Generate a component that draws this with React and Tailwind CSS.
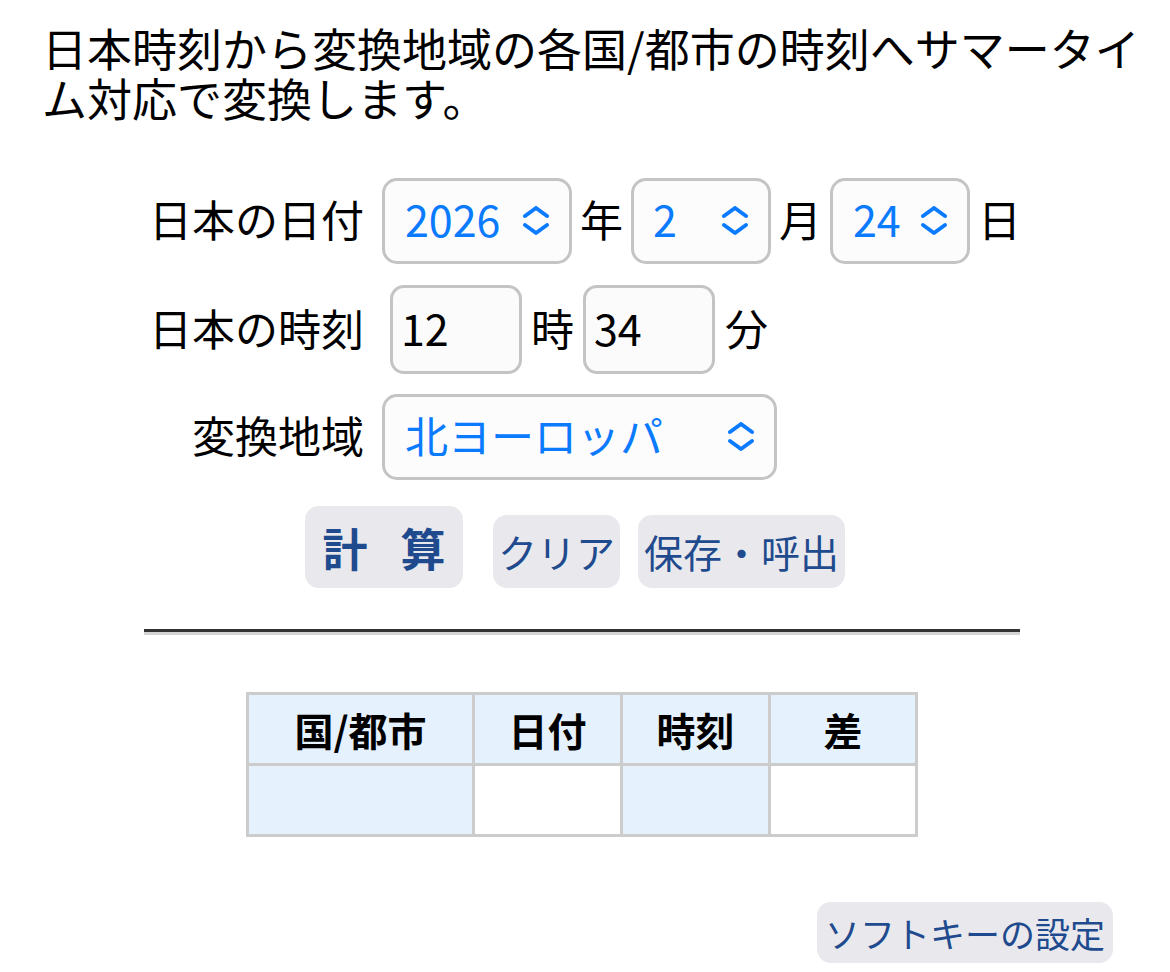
import React from "react";

const font = { fontFamily: '"Noto Sans CJK JP", "Noto Sans", sans-serif' };

const Chevrons = () => (
  <svg width="28" height="30" viewBox="0 0 28 30" fill="none" stroke="#0a7aff" strokeWidth="4" strokeLinecap="round" strokeLinejoin="round">
    <path d="M3 10 L14 2 L25 10" />
    <path d="M3 19 L14 27 L25 19" />
  </svg>
);

const Select = ({ value, w, pl = "pl-[20px]" }) => (
  <div className={`flex h-[86px] ${w} items-center justify-between rounded-[15px] border-[3px] border-[#c4c4c4] bg-[#fcfcfc] ${pl} pr-[19px] text-[43px] leading-none text-[#0a7aff]`}>
    <span className="-mt-[5px]">{value}</span>
    <Chevrons />
  </div>
);

const Field = ({ value }) => (
  <div className="flex h-[89px] w-[132px] items-center rounded-[14px] border-[3px] border-[#c4c4c4] bg-[#fbfbfb] pl-[8px] text-[43px] leading-none text-black">
    <span className="-mt-[4px]">{value}</span>
  </div>
);

const Unit = ({ children }) => <span className="-mt-[5px] text-[43px] leading-none text-black">{children}</span>;

const btn = "flex items-center justify-center rounded-[14px] bg-[#e9e9ed] text-[#1f4b8e]";

export default function App() {
  return (
    <div className="min-h-screen w-full bg-white text-black" style={font}>
      <p className="pl-[42px] pr-[20px] pt-[23px] text-[45px] leading-[50px]">
        日本時刻から変換地域の各国/都市の時刻へサマータイム対応で変換します。
      </p>

      {/* form */}
      <div className="mt-[55px] pl-[140px]">
        <div className="flex items-center">
          <div className="-mt-[5px] w-[224px] text-right text-[43px] leading-none">日本の日付</div>
          <div className="ml-[18px] flex items-center gap-[8px]">
            <Select value="2026" w="w-[190px]" />
            <Unit>年</Unit>
            <Select value="2" w="w-[140px]" pl="pl-[19px]" />
            <Unit>月</Unit>
            <Select value="24" w="w-[140px]" />
            <Unit>日</Unit>
          </div>
        </div>

        <div className="mt-[21px] flex items-center">
          <div className="-mt-[5px] w-[224px] text-right text-[43px] leading-none">日本の時刻</div>
          <div className="ml-[26px] flex items-center gap-[9px]">
            <Field value="12" />
            <Unit>時</Unit>
            <Field value="34" />
            <span className="ml-[1px] flex"><Unit>分</Unit></span>
          </div>
        </div>

        <div className="mt-[20px] flex items-center">
          <div className="-mt-[5px] w-[224px] text-right text-[43px] leading-none">変換地域</div>
          <div className="ml-[18px]">
            <Select value="北ヨーロッパ" w="w-[395px]" />
          </div>
        </div>

        <div className="mt-[26px] ml-[165px] flex items-end">
          <button className={`${btn} h-[82px] w-[158px] text-[45px] font-bold leading-none`}>
            <span>計</span>
            <span className="ml-[33px]">算</span>
          </button>
          <button className={`${btn} ml-[30px] h-[73px] px-[5px] text-[39px] leading-none`}>クリア</button>
          <button className={`${btn} ml-[18px] h-[73px] px-[6px] text-[39px] leading-none`}>保存・呼出</button>
        </div>
      </div>

      <div className="ml-[144px] mt-[41px] w-[876px] border-t-[3px] border-b-[3px] border-t-[#333333] border-b-[#d4d4d4]" />

      {/* result table */}
      <div className="ml-[246px] mt-[57px] w-[672px] border-r-[3px] border-b-[3px] border-[#cccccc]">
        <div className="flex h-[71px] text-[39px] font-bold leading-none">
          <div className="flex w-[226px] items-center justify-center border-l-[3px] border-t-[3px] border-[#cccccc] bg-[#e6f1fe]">国/都市</div>
          <div className="flex w-[148px] items-center justify-center border-l-[3px] border-t-[3px] border-[#cccccc] bg-[#e6f1fe]">日付</div>
          <div className="flex w-[148px] items-center justify-center border-l-[3px] border-t-[3px] border-[#cccccc] bg-[#e6f1fe]">時刻</div>
          <div className="flex w-[147px] items-center justify-center border-l-[3px] border-t-[3px] border-[#cccccc] bg-[#e6f1fe]">差</div>
        </div>
        <div className="flex h-[71px]">
          <div className="w-[226px] border-l-[3px] border-t-[3px] border-[#cccccc] bg-[#e6f1fe]" />
          <div className="w-[148px] border-l-[3px] border-t-[3px] border-[#cccccc] bg-white" />
          <div className="w-[148px] border-l-[3px] border-t-[3px] border-[#cccccc] bg-[#e6f1fe]" />
          <div className="w-[147px] border-l-[3px] border-t-[3px] border-[#cccccc] bg-white" />
        </div>
      </div>

      <div className="mt-[65px] flex justify-end pr-[57px]">
        <button className={`${btn} h-[61px] w-[296px] text-[35px] leading-none`}>ソフトキーの設定</button>
      </div>
    </div>
  );
}
